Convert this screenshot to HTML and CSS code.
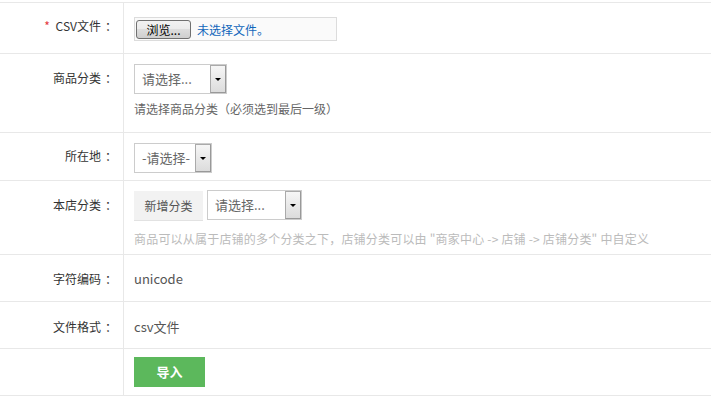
FILE: index.html
```html
<!DOCTYPE html>
<html lang="zh-CN">
<head>
<meta charset="utf-8">
<title>导入CSV</title>
<link rel="stylesheet" href="styles.css">
</head>
<body>
<div class="form">
  <div class="row row-file">
    <div class="label"><span class="req">*</span> CSV文件<span class="colon">：</span></div>
    <div class="field">
      <div class="file">
        <span class="file-btn">浏览...</span>
        <span class="file-name">未选择文件。</span>
      </div>
    </div>
  </div>
  <div class="row row-cat">
    <div class="label">商品分类<span class="colon">：</span></div>
    <div class="field">
      <div class="select select-cat">
        <span class="select-text">请选择...</span>
        <span class="select-arrow"><i class="tri"></i></span>
      </div>
      <div class="hint">请选择商品分类（必须选到最后一级）</div>
    </div>
  </div>
  <div class="row row-loc">
    <div class="label">所在地<span class="colon">：</span></div>
    <div class="field">
      <div class="select select-loc">
        <span class="select-text">-请选择-</span>
        <span class="select-arrow"><i class="tri"></i></span>
      </div>
    </div>
  </div>
  <div class="row row-shop">
    <div class="label">本店分类<span class="colon">：</span></div>
    <div class="field">
      <div class="controls">
        <span class="btn-add">新增分类</span>
        <div class="select select-shop">
          <span class="select-text">请选择...</span>
          <span class="select-arrow"><i class="tri"></i></span>
        </div>
      </div>
      <div class="hint hint-light">商品可以从属于店铺的多个分类之下，店铺分类可以由 "商家中心 -&gt; 店铺 -&gt; 店铺分类" 中自定义</div>
    </div>
  </div>
  <div class="row row-text">
    <div class="label">字符编码<span class="colon">：</span></div>
    <div class="field"><span class="value">unicode</span></div>
  </div>
  <div class="row row-text row-text2">
    <div class="label">文件格式<span class="colon">：</span></div>
    <div class="field"><span class="value">csv文件</span></div>
  </div>
  <div class="row row-submit">
    <div class="label"></div>
    <div class="field"><span class="btn-submit">导入</span></div>
  </div>
</div>
</body>
</html>
```
FILE: styles.css
```css
html, body {
  margin: 0;
  padding: 0;
  background: #fff;
}
body {
  font-family: "Noto Sans CJK SC", "Noto Sans", sans-serif;
  font-size: 12px;
  color: #333;
}
.form {
  padding-top: 2px;
}
.row {
  display: flex;
  border-bottom: 1px solid #e8e8e8;
}
.row:first-child {
  border-top: 1px solid #e8e8e8;
}
.label {
  width: 124px;
  flex: none;
  box-sizing: border-box;
  border-right: 1px solid #e8e8e8;
  text-align: right;
  padding-right: 6px;
  line-height: 30px;
  color: #333;
}
.colon {
  margin-left: 4px;
}
.req {
  color: #e4393c;
  margin-right: 3px;
}
.field {
  flex: 1;
  padding-left: 10px;
}

/* row 1 : file */
.row-file .label {
  padding-top: 8px;
}
.row-file .field {
  padding-top: 14px;
  padding-bottom: 12px;
}
.file {
  width: 203px;
  height: 24px;
  box-sizing: border-box;
  border: 1px solid #dcdcdc;
  background: #fafafa;
  display: flex;
  align-items: center;
  padding-left: 1px;
}
.file-btn {
  width: 55px;
  height: 19px;
  box-sizing: border-box;
  border: 1px solid #707070;
  border-radius: 3px;
  background: linear-gradient(#f2f2f2, #ebebeb 50%, #dddddd 50%, #cfcfcf);
  color: #000;
  font-size: 12px;
  line-height: 17px;
  text-align: center;
}
.file-name {
  margin-left: 6px;
  color: #1166bb;
  font-size: 12px;
}

/* selects */
.select {
  display: inline-flex;
  height: 30px;
  box-sizing: border-box;
  border: 1px solid #cccccc;
  background: #fff;
  vertical-align: top;
}
.select-text {
  flex: 1;
  padding-left: 7px;
  line-height: 28px;
  font-size: 13px;
  color: #666;
  white-space: nowrap;
}
.select-arrow {
  width: 16px;
  box-sizing: border-box;
  border: 1px solid #999;
  border-top-color: #aaa;
  border-left-color: #aaa;
  background: linear-gradient(#f6f6f6, #dcdcdc);
  display: flex;
  align-items: center;
  justify-content: center;
}
.tri {
  width: 0;
  height: 0;
  border-left: 3px solid transparent;
  border-right: 3px solid transparent;
  border-top: 3px solid #000;
}
.select-cat {
  width: 93px;
}
.select-loc {
  width: 78px;
}
.select-shop {
  width: 95px;
}

/* row 2 */
.row-cat .label {
  padding-top: 9px;
}
.row-cat .field {
  padding-top: 10px;
  padding-bottom: 13px;
}
.hint {
  margin-top: 5px;
  line-height: 20px;
  color: #666;
  white-space: nowrap;
}
.hint-light {
  margin-top: 8px;
  color: #bbb;
  letter-spacing: 0.2px;
}

/* row 3 */
.row-loc .label {
  padding-top: 8px;
}
.row-loc .field {
  padding-top: 10px;
  padding-bottom: 7px;
}

/* row 4 */
.row-shop .label {
  padding-top: 9px;
}
.row-shop .field {
  padding-top: 9px;
  padding-bottom: 5px;
}
.controls {
  display: flex;
  align-items: flex-start;
  gap: 4px;
}
.btn-add {
  width: 69px;
  height: 30px;
  margin-top: 1px;
  box-sizing: border-box;
  background: #f2f2f2;
  border-bottom: 1px solid #e2e2e2;
  color: #555;
  font-size: 12px;
  line-height: 29px;
  text-align: center;
}

/* rows 5,6 */
.row-text .label {
  padding-top: 9px;
  padding-bottom: 7px;
}
.row-text2 .label {
  padding-top: 10px;
  padding-bottom: 6px;
}
.row-text .field {
  padding-top: 9px;
  line-height: 30px;
}
.row-text2 .field {
  padding-top: 10px;
}
.value {
  color: #555;
  font-size: 13px;
}

/* submit row */
.row-submit .field {
  padding-top: 8px;
  padding-bottom: 8px;
}
.btn-submit {
  display: block;
  width: 71px;
  height: 30px;
  background: #5cb85c;
  color: #fff;
  font-size: 13px;
  font-weight: bold;
  line-height: 30px;
  text-align: center;
}
```
